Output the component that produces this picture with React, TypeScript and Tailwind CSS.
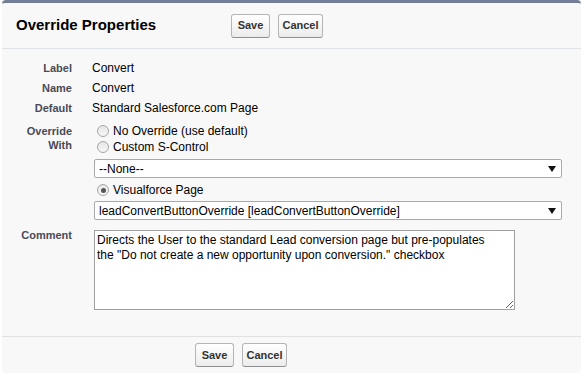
import React from "react";

function Btn({ label, width }: { label: string; width: string }) {
  return (
    <button
      className={`${width} h-[24px] rounded-[3px] border border-[#b5b5b5] border-b-[#8f8f8f] bg-gradient-to-b from-white to-[#ececec] text-[11px] font-bold text-[#333]`}
    >
      {label}
    </button>
  );
}

function Radio({ checked, label }: { checked?: boolean; label: string }) {
  return (
    <div className="flex h-[16px] items-center">
      <div className="ml-[5px] flex h-[12px] w-[12px] items-center justify-center rounded-full border border-[#a6a6a6] bg-gradient-to-b from-[#e6e6e6] to-[#f8f8f8]">
        {checked && <div className="h-[5px] w-[5px] rounded-full bg-[#555]" />}
      </div>
      <span className="ml-[4px] text-[12px] text-black">{label}</span>
    </div>
  );
}

function Select({ value }: { value: string }) {
  return (
    <div className="ml-[2px] flex h-[19px] w-[468px] items-center justify-between rounded-[2px] border border-[#a9a9a9] bg-white pl-[4px] pr-[5px] text-[12px] text-black">
      <span>{value}</span>
      <svg width="8" height="6" viewBox="0 0 8 6">
        <path d="M0 0 L8 0 L4 6 Z" fill="#111" />
      </svg>
    </div>
  );
}

function Row({ label, children }: { label: string; children: React.ReactNode }) {
  return (
    <div className="flex h-[20px] items-center">
      <div className="w-[70px] text-right text-[11px] font-bold text-[#4a4a56]">{label}</div>
      <div className="ml-[20px] text-[12px] text-black">{children}</div>
    </div>
  );
}

export default function App() {
  return (
    <div className="h-[375px] w-[585px] bg-white font-['Liberation_Sans',Arial,sans-serif]">
      <div className="ml-[2px] w-[579px] rounded-[4px] border-t-[3px] border-[#747e96] bg-[#f8f8f8] pb-[6px]">
        {/* header */}
        <div className="flex h-[46px] items-center border-b border-[#e0e3e5]">
          <h2 className="w-[229px] pl-[14px] text-[15px] font-bold text-black">Override Properties</h2>
          <div className="flex gap-[8px]">
            <Btn label="Save" width="w-[39px]" />
            <Btn label="Cancel" width="w-[45px]" />
          </div>
        </div>

        {/* body */}
        <div className="pt-[9px]">
          <Row label="Label">Convert</Row>
          <Row label="Name">Convert</Row>
          <Row label="Default">Standard Salesforce.com Page</Row>

          <div className="flex">
            <div className="w-[70px] pt-[6px] text-right text-[11px] font-bold leading-[14px] text-[#4a4a56]">
              Override
              <br />
              With
            </div>
            <div className="ml-[20px] pt-[5px]">
              <Radio label="No Override (use default)" />
              <Radio label="Custom S-Control" />
              <div className="mt-[4px]">
                <Select value="--None--" />
              </div>
              <div className="mt-[4px]">
                <Radio checked label="Visualforce Page" />
              </div>
              <div className="mt-[3px]">
                <Select value="leadConvertButtonOverride [leadConvertButtonOverride]" />
              </div>
            </div>
          </div>

          <div className="mt-[6px] flex">
            <div className="w-[70px] pt-[2px] text-right text-[11px] font-bold leading-[14px] text-[#4a4a56]">Comment</div>
            <div className="ml-[20px] pt-[4px]">
              <textarea
                readOnly
                className="ml-[2px] block h-[80px] w-[421px] border border-[#a0a0a0] bg-white px-[2px] py-[2px] text-[12px] leading-[15px] text-black"
                defaultValue={
                  'Directs the User to the standard Lead conversion page but pre-populates\nthe "Do not create a new opportunity upon conversion." checkbox'
                }
              />
            </div>
          </div>
        </div>

        {/* bottom buttons */}
        <div className="mt-[26px] flex gap-[8px] border-t border-[#dfe1e3] pl-[193px] pt-[6px]">
          <Btn label="Save" width="w-[39px]" />
          <Btn label="Cancel" width="w-[45px]" />
        </div>
      </div>
    </div>
  );
}
